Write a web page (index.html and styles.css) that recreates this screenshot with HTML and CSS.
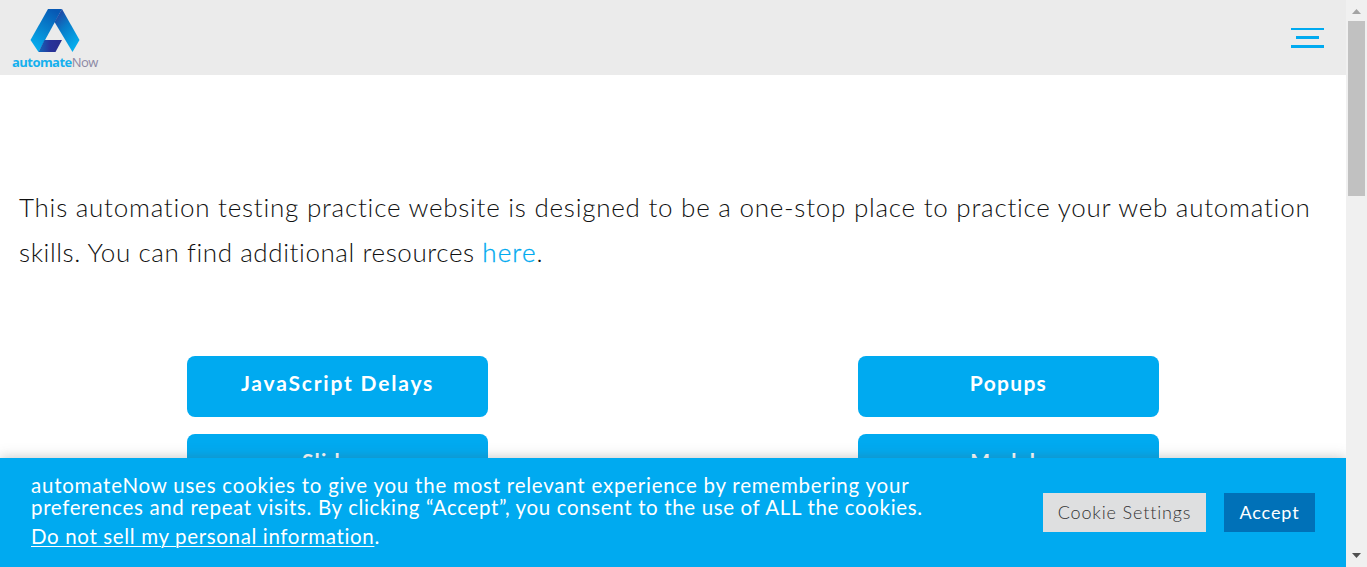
FILE: index.html
```html
<!DOCTYPE html>
<html lang="en">
<head>
<meta charset="utf-8">
<title>automateNow</title>
<link rel="stylesheet" href="styles.css">
</head>
<body>
<div class="page">
  <header class="header">
    <a class="logo">
      <svg class="logo-mark" width="50" height="43" viewBox="0 0 50 43">
        <defs>
          <linearGradient id="left" x1="0.7" y1="0" x2="0.2" y2="1"><stop offset="0" stop-color="#0758b4"/><stop offset="0.5" stop-color="#0784cf"/><stop offset="1" stop-color="#04b2f2"/></linearGradient>
          <linearGradient id="right" x1="0.2" y1="0" x2="0.8" y2="1"><stop offset="0" stop-color="#23409f"/><stop offset="0.4" stop-color="#087bc8"/><stop offset="1" stop-color="#04b5f3"/></linearGradient>
          <linearGradient id="foot" x1="0" y1="0" x2="1" y2="0"><stop offset="0" stop-color="#1269bb"/><stop offset="0.5" stop-color="#28339a"/><stop offset="1" stop-color="#2a2e8c"/></linearGradient>
        </defs>
        <path fill="url(#left)" d="M18 0H32L8.500 43L0.500 31Z"/>
        <path fill="url(#right)" d="M32 0L49.500 31L42.500 43L24.500 13Z"/>
        <path fill="url(#foot)" d="M14.500 31H32L25.500 43H8.500Z"/>
      </svg>
      <span class="logo-name"><b>automate</b>Now</span>
    </a>
    <div class="menu"><i></i><i></i><i></i></div>
  </header>
  <main class="main">
    <p class="intro"><span class="l1">This automation testing practice website is designed to be a one-stop place to practice your web automation</span><br><span class="l2">skills. You can find additional resources <a>here</a>.</span></p>
    <div class="grid">
      <a class="btn b1">JavaScript Delays</a>
      <a class="btn">Popups</a>
      <a class="btn">Sliders</a>
      <a class="btn">Modals</a>
    </div>
  </main>
  <section class="cookies">
    <div class="cookie-text">
      <p><span class="c1">automateNow uses cookies to give you the most relevant experience by remembering your</span><br><span class="c2">preferences and repeat visits. By clicking “Accept”, you consent to the use of ALL the cookies.</span></p>
      <p class="c3"><a>Do not sell my personal information</a>.</p>
    </div>
    <div class="cookie-actions">
      <a class="settings">Cookie Settings</a>
      <a class="accept">Accept</a>
    </div>
  </section>
</div>
<div class="scrollbar">
  <svg width="9" height="5"><path fill="#a3a3a3" d="M0 5L4.500 0L9 5Z"/></svg>
  <div class="thumb"></div>
  <svg class="down" width="9" height="5"><path fill="#505050" d="M0 0H9L4.500 5Z"/></svg>
</div>
</body>
</html>
```
FILE: styles.css
```css
* { box-sizing: border-box; }
body { margin: 0; height: 567px; display: flex; overflow: hidden; background: #fff; font-family: Lato, sans-serif; }
p { margin: 0; }
.page { position: relative; width: 1346px; height: 567px; overflow: hidden; }
.header { height: 75px; background: #ebebeb; display: flex; justify-content: space-between; padding: 9px 22px 0 12px; }
.logo { display: flex; flex-direction: column; width: 88px; }
.logo-mark { margin-left: 18px; }
.logo-name { font: 13px/16px "Open Sans", sans-serif; letter-spacing: -0.55px; margin-top: 2px; color: #8b88a3; white-space: nowrap; }
.logo-name b { color: #16b0ee; }
.menu { width: 33px; padding-top: 19px; display: flex; flex-direction: column; align-items: center; gap: 6px; }
.menu i { width: 33px; height: 3px; background: #00aaf0; }
.menu i:first-child { height: 2px; }
.menu i:nth-child(2) { width: 23px; }
.main { padding: 110px 19px 0; }
.intro { font-size: 26px; line-height: 45px; font-weight: 300; color: #111; white-space: nowrap; }
.intro a { color: #00aaf0; -webkit-text-stroke: 0.3px #00aaf0; letter-spacing: 1.1px; }
.l1 { letter-spacing: 0.745px; }
.l2 { letter-spacing: 0.58px; }
.grid { display: grid; grid-template-columns: 301px 301px; column-gap: 370px; row-gap: 17px; margin: 81px 0 0 168px; }
.btn { height: 61px; border-radius: 8px; background: #00aaf0; color: #fff; font-size: 21px; line-height: 24px; font-weight: 700; text-align: center; padding-top: 15px; letter-spacing: 1.3px; }
.b1 { letter-spacing: 1.8px; }
.cookies { position: absolute; left: 0; right: 0; bottom: 0; height: 109px; background: #00aaf0; color: #fff; display: flex; justify-content: space-between; padding: 16px 31px 0; box-shadow: 0 0 12px rgba(80, 80, 80, 0.35); }
.cookie-text { font-size: 20.5px; line-height: 22px; white-space: nowrap; }
.c1 { letter-spacing: 0.77px; }
.c2 { letter-spacing: 0.64px; }
.c3 { margin-top: 7px; letter-spacing: 0.65px; }
.c3 a { text-decoration: underline; text-decoration-thickness: 1px; text-underline-offset: 2px; }
.cookie-actions { display: flex; gap: 18px; padding-top: 19px; font-size: 18px; line-height: 38px; text-align: center; white-space: nowrap; }
.settings { width: 163px; height: 39px; background: #dedfe0; color: #333; font-weight: 300; letter-spacing: 0.85px; }
.accept { width: 91px; height: 39px; background: #0071b8; letter-spacing: 0.9px; }
.scrollbar { width: 21px; height: 567px; background: #f0f0f0; display: flex; flex-direction: column; align-items: center; padding: 9px 0 9px; }
.thumb { width: 17px; height: 175px; background: #c1c1c1; margin-top: 7px; }
.down { margin-top: auto; }
```
